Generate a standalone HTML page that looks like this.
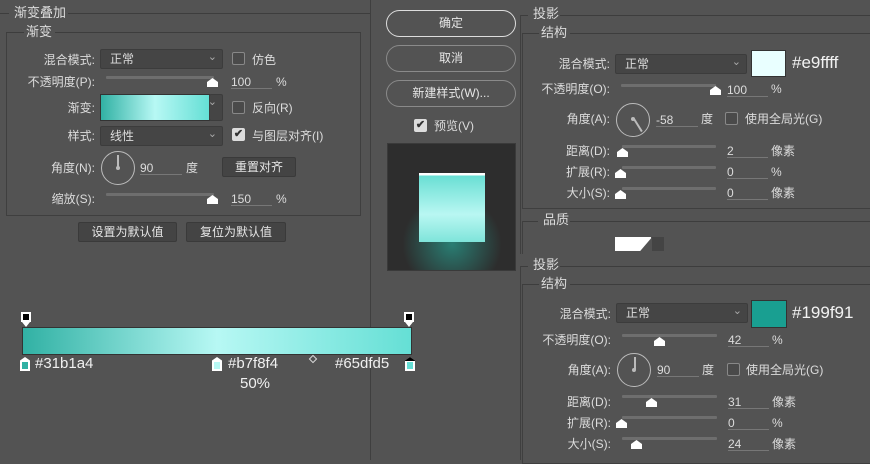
<!DOCTYPE html><html><head><meta charset="utf-8"><style>
*{margin:0;padding:0;box-sizing:border-box}
body{width:870px;height:460px;background:#535353;position:relative;overflow:hidden;font-family:"Liberation Sans","Noto Sans CJK SC",sans-serif;color:#dcdcdc;font-size:12px}
div,span{position:absolute}
.t{white-space:nowrap;line-height:14px}
.r{text-align:right}
.hl{height:1px;background:#3d3d3d}
.box{border:1px solid #3f3f3f;border-top:none}
.dd{background:#454545;border:1px solid #3c3c3c;border-radius:2px}
.dd:after{content:"⌄";position:absolute;right:5px;top:0;color:#aaa;font-size:11px}
.cb{width:13px;height:13px;border:1px solid #888;border-radius:2px;background:#4a4a4a}
.cbk{width:13px;height:13px;background:#ddd;border-radius:2px;color:#333;font-size:11px;line-height:13px;text-align:center;font-weight:bold}
.tr{height:3px;background:#6e6e6e;border-radius:1px}
.th{width:11px;height:9px;background:#fff;clip-path:polygon(50% 0,100% 45%,100% 100%,0 100%,0 45%)}
.in{border-bottom:1px solid #777;height:16px}
.btn{background:#444;border:1px solid #3a3a3a;border-radius:2px;text-align:center;line-height:19px;color:#e6e6e6}
.rb{border:1.5px solid #8a8a8a;border-radius:14px;text-align:center;color:#e6e6e6;line-height:24px}
.dial{border:1.5px solid #bbb;border-radius:50%;width:34px;height:34px}
</style></head><body>
<!-- left panel -->
<div class="hl" style="left:0;top:13px;width:9px"></div>
<div class="t" style="left:14px;top:6px;font-size:13px">渐变叠加</div>
<div class="hl" style="left:68px;top:13px;width:302px"></div>
<div class="box" style="left:6px;top:32px;width:355px;height:184px"></div>
<div class="hl" style="left:6px;top:32px;width:18px"></div>
<div class="t" style="left:26px;top:25px;font-size:13px">渐变</div>
<div class="hl" style="left:55px;top:32px;width:306px"></div>

<div class="t r" style="right:775px;top:53px">混合模式:</div>
<div class="dd" style="left:100px;top:49px;width:123px;height:20px"><span class="t" style="left:9px;top:2px">正常</span></div>
<div class="cb" style="left:232px;top:52px"></div><div class="t" style="left:252px;top:53px">仿色</div>

<div class="t r" style="right:775px;top:75px">不透明度(P):</div>
<div class="tr" style="left:106px;top:76px;width:108px"></div><div class="th" style="left:207px;top:78px"></div>
<div class="in" style="left:231px;top:73px;width:41px"><span class="t" style="left:0;top:2px">100</span></div><div class="t" style="left:276px;top:75px">%</div>

<div class="t r" style="right:775px;top:101px">渐变:</div>
<div style="left:100px;top:94px;width:110px;height:27px;border:1px solid #333;background:linear-gradient(90deg,#31b1a4,#b7f8f4 50%,#65dfd5)"></div>
<div class="dd" style="left:209px;top:94px;width:14px;height:27px"></div>
<div class="cb" style="left:232px;top:101px"></div><div class="t" style="left:252px;top:101px">反向(R)</div>

<div class="t r" style="right:775px;top:129px">样式:</div>
<div class="dd" style="left:100px;top:126px;width:123px;height:20px"><span class="t" style="left:9px;top:2px">线性</span></div>
<div class="cbk" style="left:232px;top:128px">✔</div><div class="t" style="left:252px;top:129px">与图层对齐(I)</div>

<div class="t r" style="right:775px;top:161px">角度(N):</div>
<div class="dial" style="left:101px;top:151px"></div>
<div style="left:117px;top:155px;width:1.5px;height:13px;background:#bbb"></div>
<div style="left:116px;top:166px;width:4px;height:4px;border-radius:50%;background:#bbb"></div>
<div class="in" style="left:140px;top:159px;width:42px"><span class="t" style="left:0;top:2px">90</span></div><div class="t" style="left:186px;top:161px">度</div>
<div class="btn" style="left:222px;top:157px;width:74px;height:20px">重置对齐</div>

<div class="t r" style="right:775px;top:192px">缩放(S):</div>
<div class="tr" style="left:106px;top:193px;width:108px"></div><div class="th" style="left:207px;top:195px"></div>
<div class="in" style="left:231px;top:190px;width:41px"><span class="t" style="left:0;top:2px">150</span></div><div class="t" style="left:276px;top:192px">%</div>

<div class="btn" style="left:78px;top:222px;width:99px;height:20px">设置为默认值</div>
<div class="btn" style="left:186px;top:222px;width:100px;height:20px">复位为默认值</div>

<div style="left:370px;top:0;width:1px;height:460px;background:#3f3f3f"></div>

<!-- gradient bar -->
<div style="left:21px;top:312px;width:10px;height:10px;background:#fff;border:2px solid #fff"><span style="left:0;top:0;width:6px;height:6px;background:#000"></span></div>
<div style="left:22px;top:322px;width:8px;height:5px;background:#fff;clip-path:polygon(0 0,100% 0,50% 100%)"></div>
<div style="left:404px;top:312px;width:10px;height:10px;background:#fff;border:2px solid #fff"><span style="left:0;top:0;width:6px;height:6px;background:#000"></span></div>
<div style="left:405px;top:322px;width:8px;height:5px;background:#fff;clip-path:polygon(0 0,100% 0,50% 100%)"></div>
<div style="left:22px;top:327px;width:390px;height:28px;border:1px solid #333;background:linear-gradient(90deg,#31b1a4,#b7f8f4 50%,#65dfd5)"></div>
<div style="left:20px;top:357px;width:10px;height:14px;background:#fff;clip-path:polygon(50% 0,100% 25%,100% 100%,0 100%,0 25%)"><span style="left:2px;top:5px;width:6px;height:7px;background:#31b1a4"></span></div>
<div class="t" style="left:35px;top:356px;font-size:15px;line-height:16px;color:#f0f0f0">#31b1a4</div>
<div style="left:212px;top:357px;width:10px;height:14px;background:#fff;clip-path:polygon(50% 0,100% 25%,100% 100%,0 100%,0 25%)"><span style="left:2px;top:5px;width:6px;height:7px;background:#b7f8f4"></span></div>
<div class="t" style="left:228px;top:356px;font-size:15px;line-height:16px;color:#f0f0f0">#b7f8f4</div>
<div style="left:310px;top:356px;width:6px;height:6px;border:1px solid #ddd;transform:rotate(45deg)"></div>
<div class="t" style="left:335px;top:356px;font-size:15px;line-height:16px;color:#f0f0f0">#65dfd5</div>
<div style="left:405px;top:357px;width:10px;height:14px;background:#fff;clip-path:polygon(50% 0,100% 25%,100% 100%,0 100%,0 25%)"><span style="left:0;top:0;width:10px;height:4px;background:#000"></span><span style="left:2px;top:5px;width:6px;height:7px;background:#65dfd5"></span></div>
<div class="t" style="left:240px;top:376px;font-size:15px;line-height:16px;color:#f0f0f0">50%</div>

<!-- middle -->
<div class="rb" style="left:386px;top:10px;width:130px;height:27px;border-color:#ddd">确定</div>
<div class="rb" style="left:386px;top:45px;width:130px;height:27px">取消</div>
<div class="rb" style="left:386px;top:80px;width:130px;height:27px">新建样式(W)...</div>
<div class="cbk" style="left:414px;top:119px">✔</div><div class="t" style="left:434px;top:119px">预览(V)</div>
<div style="left:387px;top:143px;width:129px;height:128px;background:#2d2d2d;border:1px solid #3a3a3a;overflow:hidden">
<span style="left:14px;top:50px;width:100px;height:100px;border-radius:50%;background:radial-gradient(circle,rgba(40,160,145,.7),rgba(40,160,145,0) 70%)"></span>
<span style="left:31px;top:29px;width:66px;height:69px;background:linear-gradient(180deg,#fff 0,#fff 2px,#6adfd4 3px,#b9f7f2 60%,#7fe4da)"></span>
</div>

<!-- right panel 1 -->
<div class="hl" style="left:520px;top:15px;width:8px"></div>
<div class="t" style="left:533px;top:7px;font-size:13px">投影</div>
<div class="hl" style="left:560px;top:15px;width:310px"></div>
<div style="left:520px;top:15px;width:1px;height:240px;background:#3f3f3f"></div>
<div class="box" style="left:522px;top:33px;width:350px;height:176px"></div>
<div class="hl" style="left:522px;top:33px;width:17px"></div>
<div class="t" style="left:541px;top:26px;font-size:13px">结构</div>
<div class="hl" style="left:570px;top:33px;width:300px"></div>

<div class="t r" style="right:260px;top:57px">混合模式:</div>
<div class="dd" style="left:615px;top:54px;width:132px;height:20px"><span class="t" style="left:9px;top:2px">正常</span></div>
<div style="left:751px;top:50px;width:35px;height:27px;background:#e9ffff;border:1px solid #333"></div>
<div class="t" style="left:792px;top:54px;font-size:17px;line-height:18px;color:#f2f2f2">#e9ffff</div>

<div class="t r" style="right:260px;top:82px">不透明度(O):</div>
<div class="tr" style="left:621px;top:84px;width:95px"></div><div class="th" style="left:710px;top:86px"></div>
<div class="in" style="left:727px;top:81px;width:41px"><span class="t" style="left:0;top:2px">100</span></div><div class="t" style="left:771px;top:82px">%</div>

<div class="t r" style="right:260px;top:112px">角度(A):</div>
<div class="dial" style="left:616px;top:103px"></div>
<div style="left:633px;top:119px;width:1.5px;height:15px;background:#bbb;transform-origin:top;transform:rotate(-32deg)"></div>
<div style="left:631px;top:117px;width:4px;height:4px;border-radius:50%;background:#bbb"></div>
<div class="in" style="left:656px;top:111px;width:42px"><span class="t" style="left:0;top:2px">-58</span></div><div class="t" style="left:701px;top:112px">度</div>
<div class="cb" style="left:725px;top:112px"></div><div class="t" style="left:745px;top:112px">使用全局光(G)</div>

<div class="t r" style="right:260px;top:144px">距离(D):</div>
<div class="tr" style="left:622px;top:145px;width:94px"></div><div class="th" style="left:617px;top:148px"></div>
<div class="in" style="left:727px;top:142px;width:41px"><span class="t" style="left:0;top:2px">2</span></div><div class="t" style="left:771px;top:144px">像素</div>
<div class="t r" style="right:260px;top:165px">扩展(R):</div>
<div class="tr" style="left:622px;top:166px;width:94px"></div><div class="th" style="left:615px;top:169px"></div>
<div class="in" style="left:727px;top:163px;width:41px"><span class="t" style="left:0;top:2px">0</span></div><div class="t" style="left:771px;top:165px">%</div>
<div class="t r" style="right:260px;top:186px">大小(S):</div>
<div class="tr" style="left:622px;top:187px;width:94px"></div><div class="th" style="left:615px;top:190px"></div>
<div class="in" style="left:727px;top:184px;width:41px"><span class="t" style="left:0;top:2px">0</span></div><div class="t" style="left:771px;top:186px">像素</div>

<div class="hl" style="left:522px;top:221px;width:16px"></div>
<div class="t" style="left:543px;top:213px;font-size:13px">品质</div>
<div class="hl" style="left:570px;top:221px;width:300px"></div>
<div style="left:522px;top:221px;width:1px;height:34px;background:#3f3f3f"></div>
<div style="left:615px;top:237px;width:36px;height:14px;background:#fff;clip-path:polygon(0 0,100% 0,100% 10%,70% 100%,0 100%)"></div>
<div style="left:652px;top:237px;width:12px;height:14px;background:#444"></div>

<!-- right panel 2 -->
<div style="left:518px;top:254px;width:352px;height:206px;background:#535353"></div>
<div class="hl" style="left:520px;top:266px;width:8px"></div>
<div class="t" style="left:533px;top:258px;font-size:13px">投影</div>
<div class="hl" style="left:560px;top:266px;width:310px"></div>
<div style="left:520px;top:266px;width:1px;height:194px;background:#3f3f3f"></div>
<div class="box" style="left:522px;top:284px;width:350px;height:180px"></div>
<div class="hl" style="left:522px;top:284px;width:17px"></div>
<div class="t" style="left:541px;top:277px;font-size:13px">结构</div>
<div class="hl" style="left:570px;top:284px;width:300px"></div>

<div class="t r" style="right:259px;top:307px">混合模式:</div>
<div class="dd" style="left:616px;top:303px;width:132px;height:20px"><span class="t" style="left:9px;top:2px">正常</span></div>
<div style="left:751px;top:300px;width:36px;height:28px;background:#199f91;border:1px solid #333"></div>
<div class="t" style="left:792px;top:304px;font-size:17px;line-height:18px;color:#f2f2f2">#199f91</div>

<div class="t r" style="right:259px;top:333px">不透明度(O):</div>
<div class="tr" style="left:622px;top:334px;width:95px"></div><div class="th" style="left:654px;top:337px"></div>
<div class="in" style="left:728px;top:331px;width:41px"><span class="t" style="left:0;top:2px">42</span></div><div class="t" style="left:772px;top:333px">%</div>

<div class="t r" style="right:259px;top:363px">角度(A):</div>
<div class="dial" style="left:617px;top:353px"></div>
<div style="left:634px;top:357px;width:1.5px;height:13px;background:#bbb"></div>
<div style="left:632px;top:368px;width:4px;height:4px;border-radius:50%;background:#bbb"></div>
<div class="in" style="left:657px;top:361px;width:42px"><span class="t" style="left:0;top:2px">90</span></div><div class="t" style="left:702px;top:363px">度</div>
<div class="cb" style="left:727px;top:363px"></div><div class="t" style="left:746px;top:363px">使用全局光(G)</div>

<div class="t r" style="right:259px;top:395px">距离(D):</div>
<div class="tr" style="left:622px;top:395px;width:95px"></div><div class="th" style="left:646px;top:398px"></div>
<div class="in" style="left:728px;top:393px;width:41px"><span class="t" style="left:0;top:2px">31</span></div><div class="t" style="left:772px;top:395px">像素</div>
<div class="t r" style="right:259px;top:416px">扩展(R):</div>
<div class="tr" style="left:622px;top:416px;width:95px"></div><div class="th" style="left:616px;top:419px"></div>
<div class="in" style="left:728px;top:414px;width:41px"><span class="t" style="left:0;top:2px">0</span></div><div class="t" style="left:772px;top:416px">%</div>
<div class="t r" style="right:259px;top:437px">大小(S):</div>
<div class="tr" style="left:622px;top:437px;width:95px"></div><div class="th" style="left:631px;top:440px"></div>
<div class="in" style="left:728px;top:435px;width:41px"><span class="t" style="left:0;top:2px">24</span></div><div class="t" style="left:772px;top:437px">像素</div>
</body></html>
